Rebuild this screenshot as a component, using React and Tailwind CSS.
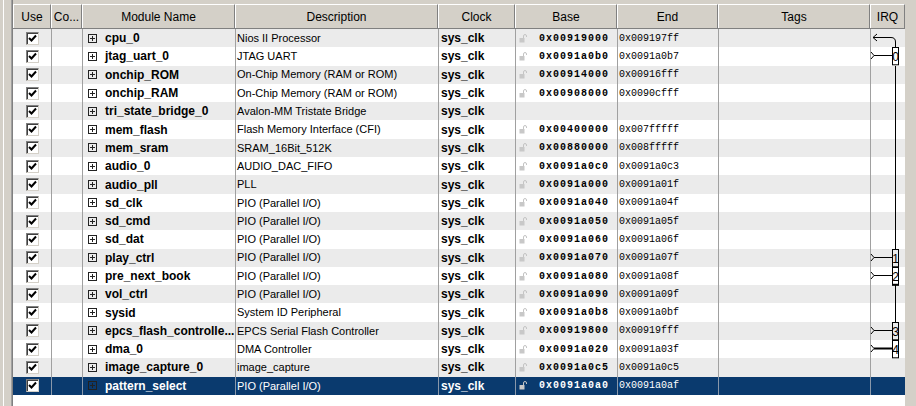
import React from 'react'

const rows = [
  ['cpu_0', 'Nios II Processor', '0x00919000', '0x009197ff'],
  ['jtag_uart_0', 'JTAG UART', '0x0091a0b0', '0x0091a0b7'],
  ['onchip_ROM', 'On-Chip Memory (RAM or ROM)', '0x00914000', '0x00916fff'],
  ['onchip_RAM', 'On-Chip Memory (RAM or ROM)', '0x00908000', '0x0090cfff'],
  ['tri_state_bridge_0', 'Avalon-MM Tristate Bridge', '', ''],
  ['mem_flash', 'Flash Memory Interface (CFI)', '0x00400000', '0x007fffff'],
  ['mem_sram', 'SRAM_16Bit_512K', '0x00880000', '0x008fffff'],
  ['audio_0', 'AUDIO_DAC_FIFO', '0x0091a0c0', '0x0091a0c3'],
  ['audio_pll', 'PLL', '0x0091a000', '0x0091a01f'],
  ['sd_clk', 'PIO (Parallel I/O)', '0x0091a040', '0x0091a04f'],
  ['sd_cmd', 'PIO (Parallel I/O)', '0x0091a050', '0x0091a05f'],
  ['sd_dat', 'PIO (Parallel I/O)', '0x0091a060', '0x0091a06f'],
  ['play_ctrl', 'PIO (Parallel I/O)', '0x0091a070', '0x0091a07f'],
  ['pre_next_book', 'PIO (Parallel I/O)', '0x0091a080', '0x0091a08f'],
  ['vol_ctrl', 'PIO (Parallel I/O)', '0x0091a090', '0x0091a09f'],
  ['sysid', 'System ID Peripheral', '0x0091a0b8', '0x0091a0bf'],
  ['epcs_flash_controlle...', 'EPCS Serial Flash Controller', '0x00919800', '0x00919fff'],
  ['dma_0', 'DMA Controller', '0x0091a020', '0x0091a03f'],
  ['image_capture_0', 'image_capture', '0x0091a0c5', '0x0091a0c5'],
  ['pattern_select', 'PIO (Parallel I/O)', '0x0091a0a0', '0x0091a0af'],
]

// irq wiring per row: src, line, box number, or nothing
const irq = ['src', 0, 'line', 'line', 'line', 'line', 'line', 'line', 'line', 'line', 'line', 'line', 1, 2, 'line', 'line', 3, 4, null, null]

const headers = ['Use', 'Co...', 'Module Name', 'Description', 'Clock', 'Base', 'End', 'Tags', 'IRQ']

function Check(){
  return (
    <span className="w-[13px] h-[13px] bg-white border border-t-[#808080] border-l-[#808080] border-b-[#d4d0c8] border-r-[#d4d0c8] shadow-[inset_1px_1px_0_#404040] flex items-center justify-center">
      <svg width="9" height="9" viewBox="0 0 9 9">
        <path d="M1 4 L3.5 6.5 L8 1.5" stroke="#000" strokeWidth="2" fill="none" />
      </svg>
    </span>
  )
}

function Plus(){
  return (
    <span className="w-[9px] h-[9px] border border-[#222] flex items-center justify-center shrink-0">
      <svg width="7" height="7" viewBox="0 0 7 7">
        <path d="M1 3.5 H6 M3.5 1 V6" stroke="#222" strokeWidth="1" />
      </svg>
    </span>
  )
}

function Lock(){
  return (
    <svg width="8" height="9" viewBox="0 0 8 9" className="shrink-0">
      <path d="M4.5 4 V2 A1.5 1.5 0 0 1 7.5 2 V3" stroke="#c4c4c4" strokeWidth="1" fill="none" />
      <rect x="0.5" y="4" width="5" height="4.5" fill="#c8c8c8" />
    </svg>
  )
}

function Irq({ k, sel }){
  if (k === null || sel) return null
  const c = '#000'
  return (
    <svg className="absolute left-0 top-0 overflow-visible" width="34" height="18">
      {k === 'src' && (
        <g stroke={c} fill="none" strokeWidth="1">
          <path d="M6 5 L2 8.5 L6 12" />
          <path d="M2 8.5 H20 Q24.5 8.5 24.5 13 V19" />
        </g>
      )}
      {k === 'line' && <path d="M24.5 0 V19" stroke={c} strokeWidth="1" />}
      {typeof k === 'number' && (
        <g>
          <g stroke={c} fill="none" strokeWidth={k === 4 ? 2 : 1}>
            <path d="M0 5 L3 8.5 L0 12" strokeWidth="1" />
            <path d="M3 8.5 H21" />
          </g>
          <rect x="21.5" y="0.5" width="6" height="17.3" stroke={c} fill="none" strokeWidth="1" />
          {k === 2 && <path d="M21 17.8 H28" stroke={c} strokeWidth="2" />}
          <text x="24.6" y="13.5" fontSize="12" textAnchor="middle" fill={c} fontFamily="Liberation Sans, sans-serif">{k}</text>
        </g>
      )}
    </svg>
  )
}

export default function App(){
  return (
    <div className="w-[916px] h-[406px] bg-[#d4d0c8] flex overflow-hidden font-['Liberation_Sans',Arial,sans-serif] text-black">
      {/* left frame */}
      <div className="w-[13px] flex shrink-0">
        <div className="w-[3px] bg-[#d4d0c8]" />
        <div className="w-px bg-white" />
        <div className="w-[7px] bg-[#d4d0c8]" />
        <div className="w-px bg-[#a0a0a0]" />
        <div className="w-px bg-[#808080]" />
      </div>

      <div className="w-[892px] flex flex-col shrink-0">
        <div className="h-[4px] shrink-0" />
        {/* header */}
        <div className="grid grid-cols-[38px_31px_153px_203px_77px_102px_101px_152px_35px] h-[25px] shrink-0 border-b border-[#808080] text-[12px]">
          {headers.map((h) => (
            <div key={h} className="bg-[#d4d0c8] border-t border-l border-t-white border-l-white border-r border-r-[#808080] flex items-center justify-center">
              {h}
            </div>
          ))}
        </div>

        {/* rows */}
        <div className="flex-1 bg-white">
          {rows.map((r, i) => {
            const sel = i === rows.length - 1
            const bg = sel ? 'bg-[#0a3a6e] text-white' : i % 2 === 0 ? 'bg-[#ebebeb]' : 'bg-white'
            const line = sel ? 'border-l border-[#8a98aa]' : 'border-l border-[#a0a0a0]'
            return (
              <div key={r[0]} className={`grid grid-cols-[38px_31px_153px_203px_77px_102px_101px_152px_35px] h-[18.3px] ${bg}`}>
                <div className="flex items-center justify-center"><Check /></div>
                <div className={line} />
                <div className={`${line} flex items-center pl-[5px] gap-[8px] overflow-hidden`}>
                  <Plus />
                  <span className="text-[12px] font-bold whitespace-nowrap">{r[0]}</span>
                </div>
                <div className={`${line} flex items-center pl-px text-[11px] whitespace-nowrap overflow-hidden`}>{r[1]}</div>
                <div className={`${line} flex items-center pl-[2px] text-[12px] font-bold`}>sys_clk</div>
                <div className={`${line} flex items-center pl-[3px] gap-[12px]`}>
                  {r[2] && <Lock />}
                  <span className="font-['Liberation_Mono',monospace] font-bold text-[10px] tracking-[1px]">{r[2]}</span>
                </div>
                <div className={`${line} flex items-center pl-px font-['Liberation_Mono',monospace] text-[10px]`}>{r[3]}</div>
                <div className={line} />
                <div className={`${line} relative`}>
                  <Irq k={irq[i]} sel={sel} />
                </div>
              </div>
            )
          })}
        </div>
      </div>

      {/* right frame */}
      <div className="flex-1 bg-[#d4d0c8]" />
    </div>
  )
}
